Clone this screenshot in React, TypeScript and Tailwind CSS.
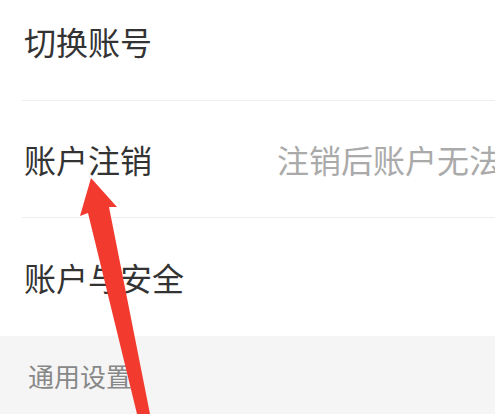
export default function App() {
  const font = { fontFamily: '"Noto Sans CJK SC", "Noto Sans", sans-serif' };

  return (
    <div className="relative h-[414px] w-[495px] overflow-hidden bg-white" style={font}>
      <div className="-mt-[19px]">
        {/* Rows */}
        <div className="ml-[22px] flex h-[120px] items-center border-b border-[#eeeeee] pl-[2px]">
          <span className="text-[32px] text-[#333333]">切换账号</span>
        </div>
        <div className="ml-[22px] flex h-[117px] items-center border-b border-[#eeeeee] pl-[2px]">
          <span className="text-[32px] text-[#333333]">账户注销</span>
          <span className="ml-auto w-[218px] shrink-0 overflow-hidden whitespace-nowrap text-[32px] text-[#aaaaaa]">
            注销后账户无法恢复
          </span>
        </div>
        <div className="ml-[22px] flex h-[118px] items-center pl-[2px]">
          <span className="text-[32px] text-[#333333]">账户与安全</span>
        </div>
      </div>

      {/* Section header */}
      <div className="flex h-[78px] items-center bg-[#f5f5f5] pl-[28px]">
        <span className="text-[26px] text-[#888888]">通用设置</span>
      </div>

      {/* Red arrow overlay */}
      <svg className="absolute left-0 top-0" width="495" height="414" viewBox="0 0 495 414">
        <polygon
          points="91,178 117,207 109,207 150,414 137,414 88,213 80,216"
          fill="#f23a2e"
        />
      </svg>
    </div>
  );
}
